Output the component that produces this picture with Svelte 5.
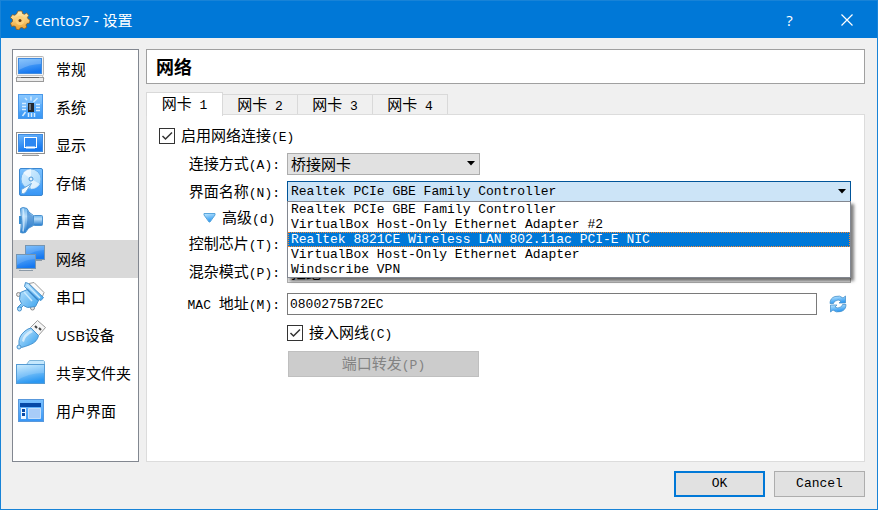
<script lang="ts">
	/**
	 * VM settings dialog, network page
	 *
	 * Category list on the left, adapter tabs and form on the right.
	 */

	const categories = [
		{ id: 'general', label: '常规' },
		{ id: 'system', label: '系统' },
		{ id: 'display', label: '显示' },
		{ id: 'storage', label: '存储' },
		{ id: 'audio', label: '声音' },
		{ id: 'network', label: '网络' },
		{ id: 'serial', label: '串口' },
		{ id: 'usb', label: 'USB设备' },
		{ id: 'folders', label: '共享文件夹' },
		{ id: 'interface', label: '用户界面' }
	];

	const adapters = [1, 2, 3, 4];

	const interfaces = [
		'Realtek PCIe GBE Family Controller',
		'VirtualBox Host-Only Ethernet Adapter #2',
		'Realtek 8821CE Wireless LAN 802.11ac PCI-E NIC',
		'VirtualBox Host-Only Ethernet Adapter',
		'Windscribe VPN'
	];

	let category = $state('network');
	let adapter = $state(1);
	let enabled = $state(true);
	let connected = $state(true);
	let mac = $state('0800275B72EC');
	let current = $state(interfaces[0]);
	let hovered = $state(2);
	let listOpen = $state(true);

	const choose = (name: string) => {
		current = name;
		listOpen = false;
	};
</script>

{#snippet icon(id: string)}
	<svg class="icon" viewBox="0 0 32 32" aria-hidden="true">
		{#if id === 'general'}
			<rect x="1.5" y="3.5" width="27" height="19" rx="1" fill="#f2f2f2" stroke="#b4b4b4" />
			<rect x="3.5" y="5.5" width="23" height="15" fill="url(#screen)" stroke="#3f8be0" />
			<path d="M4 6h22v5Q14 11 4 17z" fill="#fff" opacity=".2" />
			<path d="M3 22.5h24l2 3H1z" fill="#f8f8f8" stroke="#c4c4c4" />
			<rect x="1.5" y="24.5" width="27" height="4" fill="#ececec" stroke="#999" />
			<path d="M6 24.500h18" stroke="#666" />
		{:else if id === 'system'}
			<rect x="3.5" y="3.5" width="24" height="24" fill="url(#tile)" stroke="#4a98e8" />
			<path d="M4 4h23v9Q13 13 4 21z" fill="#fff" opacity=".1" />
			<rect x="13" y="12" width="6" height="9" fill="#23282e" />
			<path d="M14 13h2v6h-2z" fill="#6a737d" />
			<path
				d="M16 5.500v4M22.500 7l-4 4M10 7l2 2M7 12.500h4M7 15.500h4M7 18.500h4M21 13.500h4M21 16.500h4M21 19.500h4M13.500 22v4M16.500 22v4M19.500 22v4M10.500 21l-3 4"
				stroke="#d4ecff"
				stroke-width="1.500"
			/>
		{:else if id === 'display'}
			<rect x="1.5" y="3.5" width="28" height="21" fill="#fff" stroke="#8f8f8f" />
			<rect x="3.5" y="5.5" width="24" height="17" fill="url(#screen)" stroke="#3f8be0" />
			<rect x="9.5" y="8.5" width="12" height="10" fill="#2d87f2" stroke="#fff" />
			<path d="M11 18.500h9" stroke="#fff" stroke-width="2" />
			<path d="M10 24.500h11M7 26.500h17" stroke="#9a9a9a" />
			<path d="M8 25.500h15" stroke="#e5e5e5" />
		{:else if id === 'storage'}
			<rect x="4.5" y="1.5" width="23" height="27" rx="1.5" fill="url(#tile)" stroke="#3b87d0" />
			<circle cx="16" cy="12" r="10" fill="url(#disc)" stroke="#6db2ee" />
			<path d="M16 12L8 6q3-4 8-4zM16 12l9 5q-3 5-9 5z" fill="#fff" opacity=".6" />
			<circle cx="16" cy="12" r="2" fill="#e5f3ff" stroke="#4795d8" />
			<path d="M16.500 16.500l-6 9q-2 2-4 1v-4z" fill="#f4faff" stroke="#67a8de" />
		{:else if id === 'audio'}
			<path d="M4 11h3v8H4z" fill="#3a8ed2" />
			<rect x="18.5" y="10.5" width="9" height="10" rx="1" fill="url(#pipe)" stroke="#4b92d0" />
			<path
				d="M5.500 3.500q2-2 6.500 0 1 4 6.500 7v10q-6 2-8 7-3 1-5 0 2-12 0-24z"
				fill="url(#pipe)"
				stroke="#4b92d0"
			/>
			<path d="M12 4q1 11-1 22 3-4 7-6v-9q-5-3-6-7z" fill="#2272c4" opacity=".55" />
			<path d="M8 3.500q2 12 0 23" fill="none" stroke="#e0f2ff" stroke-width="1.500" opacity=".7" />
		{:else if id === 'network'}
			<rect x="10.5" y="2.500" width="19" height="14" fill="url(#screen)" stroke="#7595b2" />
			<path d="M11 3h18v4q-9 0-18 6z" fill="#fff" opacity=".12" />
			<path d="M21 17.500h6" stroke="#8b99a6" />
			<rect x="1.5" y="11.5" width="19" height="14" fill="url(#screen)" stroke="#7595b2" />
			<path d="M2 12h18v4q-9 0-18 6z" fill="#fff" opacity=".12" />
			<path d="M4 27.500h14" stroke="#8b99a6" />
			<path d="M6 26.500h10" stroke="#e2e9ef" />
		{:else if id === 'serial'}
			<path d="M14 2.500l5-1 10 10-2 5z" fill="#fafafa" stroke="#9c9c9c" />
			<circle cx="3.5" cy="13.5" r="2" fill="#e6e6e6" stroke="#8a8a8a" />
			<circle cx="17.500" cy="27" r="2" fill="#e6e6e6" stroke="#8a8a8a" />
			<path
				d="M10.500 1.500l3 1 15 14-2.500 3-2-1-3.500 7-8 1-4-2-4 4-2-2 4-4-2-4 1-7 7-3-3-3z"
				fill="url(#plug)"
				stroke="#4691cd"
			/>
			<path d="M12 8l11 11" stroke="#3684c8" stroke-width="1.500" />
			<path d="M9 11l8 9M12 4l13 13" stroke="#c9eaff" stroke-width="1.500" />
			<circle cx="4.500" cy="28" r="2" fill="#b5defa" stroke="#4691cd" />
		{:else if id === 'usb'}
			<path d="M15.500 8.500l7-7 8 7-7 8z" fill="#f6f6f6" stroke="#9a9a9a" />
			<path d="M20 7l2 2M24 9l2 2" stroke="#444" stroke-width="2" />
			<path
				d="M4 25.500q-1-8 6-13.500 3-2.500 6-3l7.500 7.500q-1 6-8 9-5 2-9 3z"
				fill="url(#plug)"
				stroke="#4a94cf"
			/>
			<path d="M7 22q1-7 9-11l2 2Q10 17 9 23z" fill="#fff" opacity=".6" />
			<circle cx="4" cy="28" r="2" fill="#bfe3fa" stroke="#4a94cf" />
		{:else if id === 'folders'}
			<path d="M11.500 7.500l3-4h14l1 1v4z" fill="#c5e8fd" stroke="#7fb6da" />
			<rect x="1.5" y="7.5" width="28" height="19" fill="url(#folder)" stroke="#559bd4" />
			<path d="M2 8h27v8Q12 16 2 24z" fill="#fff" opacity=".15" />
		{:else}
			<rect x="3.5" y="4.5" width="25" height="22" fill="url(#tile)" stroke="#5898dc" />
			<path d="M5 8h21v4H5z" fill="#0749a7" />
			<path d="M6 13h5v11H6z" fill="#eaf5ff" />
			<path d="M7 14h3v3H7zM7 18h3v3H7z" fill="#0749a7" />
			<path d="M13.500 13.500h12v10h-12z" fill="#a8ccf8" stroke="#c4defa" />
		{/if}
	</svg>
{/snippet}

{#snippet tick()}
	<svg class="tick" viewBox="0 0 16 16" aria-hidden="true">
		<path d="M3.500 8l3 3L13 4.500" fill="none" stroke="#333" stroke-width="1.500" />
	</svg>
{/snippet}

{#snippet arrow()}
	<svg class="arrow" viewBox="0 0 8 5" aria-hidden="true"><path d="M0 0h8L4 4.500z" fill="#000" /></svg>
{/snippet}

<svg class="defs" aria-hidden="true">
	<defs>
		<linearGradient id="screen" x1="0" y1="0" x2="0.3" y2="1">
			<stop offset="0" stop-color="#6fb8fb" />
			<stop offset="1" stop-color="#1678f0" />
		</linearGradient>
		<linearGradient id="tile" x1="0" y1="0" x2="0" y2="1">
			<stop offset="0" stop-color="#7cc2ff" />
			<stop offset="1" stop-color="#3695f5" />
		</linearGradient>
		<linearGradient id="disc" x1="0" y1="0" x2="1" y2="1">
			<stop offset="0" stop-color="#e2f3ff" />
			<stop offset="1" stop-color="#9ad2fb" />
		</linearGradient>
		<linearGradient id="pipe" x1="0" y1="0" x2="0" y2="1">
			<stop offset="0" stop-color="#6fb5ec" />
			<stop offset="0.35" stop-color="#b9defa" />
			<stop offset="1" stop-color="#2179cc" />
		</linearGradient>
		<linearGradient id="plug" x1="0" y1="0" x2="1" y2="1">
			<stop offset="0" stop-color="#d0edff" />
			<stop offset="1" stop-color="#2b9bec" />
		</linearGradient>
		<linearGradient id="folder" x1="0" y1="0" x2="0.3" y2="1">
			<stop offset="0" stop-color="#c4eaff" />
			<stop offset="1" stop-color="#2c98f2" />
		</linearGradient>
		<linearGradient id="gold" x1="0" y1="0" x2="0" y2="1">
			<stop offset="0" stop-color="#fff0b8" />
			<stop offset="1" stop-color="#eda02c" />
		</linearGradient>
	</defs>
</svg>

<div class="dialog">
	<header class="titlebar">
		<svg class="gear" viewBox="0 0 20 20" aria-hidden="true">
			<path
				d="M8 1h4l.5 2.500 2 .8 2.200-1.400 2 2.600-1.300 2 .8 1.500L20 10l-.5 3-2.500.5-1 1.500.9 2.200-2.800 1.800-2-1.500-1.600.3L9 20l-3-.8-.3-2.400L4 16l-2.400.4L.5 13l2-1.500V9.500l-2-2 1.800-2.800 2.500.5L6.500 4z"
				fill="url(#gold)"
				stroke="#8a5a20"
				stroke-width=".8"
			/>
			<circle cx="10" cy="10.500" r="4.500" fill="#fbd07a" />
			<circle cx="10" cy="10.500" r="1.500" fill="#6c3b10" />
		</svg>
		<h1>centos7 - 设置</h1>
		<button class="window-button" type="button" aria-label="Help">?</button>
		<button class="window-button" type="button" aria-label="Close">
			<svg class="close" viewBox="0 0 12 12" aria-hidden="true">
				<path d="M0.500 0.500l11 11M11.500 0.500l-11 11" stroke="#fff" stroke-width="1.200" />
			</svg>
		</button>
	</header>

	<main class="body">
		<nav class="sidebar">
			{#each categories as item (item.id)}
				<button
					class="category"
					class:selected={category === item.id}
					type="button"
					onclick={() => (category = item.id)}
				>
					{@render icon(item.id)}
					<span>{item.label}</span>
				</button>
			{/each}
		</nav>

		<section class="page">
			<h2 class="heading">网络</h2>

			<div class="tabs" role="tablist">
				{#each adapters as n (n)}
					<button
						class="tab"
						class:active={adapter === n}
						type="button"
						role="tab"
						aria-selected={adapter === n}
						onclick={() => (adapter = n)}
					>
						<span class="han">网卡</span> {n}
					</button>
				{/each}
			</div>

			<div class="panel" role="tabpanel">
				<label class="check">
					<span class="box"><input type="checkbox" bind:checked={enabled} />{#if enabled}{@render tick()}{/if}</span>
					<span><span class="han">启用网络连接</span>(E)</span>
				</label>

				<div class="row">
					<label class="name" for="attached"><span class="han">连接方式</span>(A):</label>
					<div class="combo short">
						<select id="attached" class="han">
							<option>桥接网卡</option>
						</select>
						{@render arrow()}
					</div>
				</div>

				<div class="row">
					<label class="name" for="interface"><span class="han">界面名称</span>(N):</label>
					<div class="combo" class:open={listOpen}>
						<select id="interface" bind:value={current}>
							{#each interfaces as name (name)}
								<option>{name}</option>
							{/each}
						</select>
						{@render arrow()}
						{#if listOpen}
							<div class="popup" role="listbox" aria-label="界面名称">
								{#each interfaces as name, i (name)}
									<button
										class="option"
										class:hovered={hovered === i}
										type="button"
										role="option"
										aria-selected={hovered === i}
										onmouseenter={() => (hovered = i)}
										onclick={() => choose(name)}
									>
										{name}
									</button>
								{/each}
							</div>
						{/if}
					</div>
				</div>

				<div class="row advanced-row">
					<button class="advanced" type="button" aria-expanded="true">
						<svg class="triangle" viewBox="0 0 13 10" aria-hidden="true">
							<path d="M1 .5h11v1.500L7 9H6L1 2z" fill="url(#folder)" stroke="#5aa6dc" />
						</svg>
						<span><span class="han">高级</span>(d)</span>
					</button>
				</div>

				<div class="row">
					<label class="name" for="chip"><span class="han">控制芯片</span>(T):</label>
					<div class="combo">
						<select id="chip"></select>
					</div>
				</div>

				<div class="row">
					<label class="name" for="promiscuous"><span class="han">混杂模式</span>(P):</label>
					<div class="combo">
						<select id="promiscuous" class="han">
							<option>拒绝</option>
						</select>
					</div>
				</div>

				<div class="row mac-row">
					<label class="name" for="mac">MAC <span class="han">地址</span>(M):</label>
					<input id="mac" class="text" type="text" bind:value={mac} />
					<button class="refresh" type="button" aria-label="Refresh">
						<svg viewBox="0 0 18 18" aria-hidden="true">
							<path
								d="M1 8.500Q1 3 6 1.500q5-1.500 8 1.500l2.500-2v7H10L12 6Q9 4 6.500 6 4.500 7 4.500 8.500z"
								fill="url(#folder)"
								stroke="#4a93cc"
								stroke-width=".8"
							/>
							<path
								d="M17 9.500q0 5.500-5 7-5 1.500-8-1.500l-2.500 2v-7H8L6 12q3 2 5.500 0 2-1 2-2.500z"
								fill="url(#folder)"
								stroke="#4a93cc"
								stroke-width=".8"
							/>
						</svg>
					</button>
				</div>

				<label class="check indented">
					<span class="box"><input type="checkbox" bind:checked={connected} />{#if connected}{@render tick()}{/if}</span>
					<span><span class="han">接入网线</span>(C)</span>
				</label>

				<button class="forward" type="button" disabled><span class="han">端口转发</span>(P)</button>
			</div>
		</section>
	</main>

	<footer class="actions">
		<button class="action primary" type="button">OK</button>
		<button class="action" type="button">Cancel</button>
	</footer>
</div>

<style>
	:global(body) {
		margin: 0;
	}

	.dialog,
	.dialog * {
		box-sizing: border-box;
	}

	.dialog {
		--ui: 'Open Sans', 'Noto Sans CJK SC', sans-serif;
		--mono: 'Liberation Mono', 'Noto Sans CJK SC', monospace;
		--label: 121px;
		display: flex;
		flex-direction: column;
		min-height: 100vh;
		border: 1px solid #1883d7;
		background: #f0f0f0;
		color: #000;
		font-family: var(--mono);
		font-size: 13px;
		line-height: 20px;
	}

	.defs {
		position: absolute;
		width: 0;
		height: 0;
	}

	button,
	select,
	input {
		margin: 0;
		padding: 0;
		border: 0;
		border-radius: 0;
		background: none;
		color: inherit;
		font: inherit;
	}

	.han {
		font-family: 'Noto Sans CJK SC', sans-serif;
		font-size: 15px;
	}

	/* Title bar */
	.titlebar {
		display: flex;
		align-items: center;
		height: 37px;
		padding-left: 9px;
		background: #0078d7;
		color: #fff;
		font-family: var(--ui);
	}

	.gear {
		width: 20px;
		height: 20px;
		margin-right: 5px;
	}

	h1 {
		flex: 1;
		margin: 0;
		font-size: 15px;
		font-weight: 400;
	}

	.window-button {
		display: flex;
		align-items: center;
		justify-content: center;
		width: 57px;
		height: 37px;
		font-size: 15px;
	}

	.close {
		width: 12px;
		height: 12px;
	}

	.window-button:last-child {
		margin-right: 2px;
	}

	/* Body */
	.body {
		display: flex;
		flex: 1;
		gap: 7px;
		padding: 11px 12px 0 11px;
	}

	.sidebar {
		display: flex;
		flex-direction: column;
		flex: 0 0 127px;
		border: 1px solid #828790;
		background: #fff;
		font-family: var(--ui);
		font-size: 15px;
	}

	.category {
		display: flex;
		align-items: center;
		gap: 9px;
		height: 38px;
		padding-left: 2px;
		text-align: left;
		white-space: nowrap;
	}

	.category.selected {
		background: #d9d9d9;
	}

	.icon {
		flex: none;
		width: 32px;
		height: 32px;
	}

	.page {
		display: flex;
		flex-direction: column;
		flex: 1;
		min-width: 0;
	}

	.heading {
		margin: 0;
		padding: 6px 9px 7px;
		border: 1px solid #a0a0a0;
		background: #fff;
		font-family: 'Noto Sans CJK SC', sans-serif;
		font-size: 18px;
		font-weight: 700;
		line-height: 20px;
	}

	/* Tabs */
	.tabs {
		display: flex;
		align-items: flex-end;
		height: 23px;
		margin-top: 8px;
	}

	.tab {
		width: 75px;
		height: 21px;
		border: 1px solid #d9d9d9;
		border-left: 0;
		line-height: 18px;
		white-space: nowrap;
	}

	.tab.active {
		position: relative;
		width: 77px;
		height: 24px;
		margin-bottom: -1px;
		border-left: 1px solid #d9d9d9;
		border-bottom: 0;
		background: #fff;
	}

	.panel {
		display: flex;
		flex-direction: column;
		flex: 1;
		gap: 6px;
		margin-top: -1px;
		padding: 10px 13px 0 12px;
		border: 1px solid #dcdcdc;
		background: #fff;
	}

	/* Form */
	.row {
		display: flex;
		align-items: center;
		gap: 7px;
		height: 22px;
	}

	.name {
		flex: 0 0 var(--label);
		text-align: right;
		white-space: nowrap;
	}

	.check {
		display: flex;
		align-items: center;
		align-self: flex-start;
		gap: 6px;
		height: 22px;
	}

	.check.indented {
		height: 24px;
		margin-left: 128px;
	}

	.box {
		position: relative;
		width: 16px;
		height: 16px;
	}

	.box input {
		display: block;
		width: 16px;
		height: 16px;
		border: 1px solid #333;
		background: #fff;
		appearance: none;
	}

	.tick {
		position: absolute;
		inset: 0;
		pointer-events: none;
	}

	.combo {
		position: relative;
		flex: 1;
	}

	.combo.short {
		flex: 0 0 193px;
	}

	.combo select {
		display: block;
		width: 100%;
		height: 22px;
		padding: 0 20px 0 3px;
		border: 1px solid #adadad;
		background: #e1e1e1;
		line-height: 20px;
		appearance: none;
	}

	.combo.open select {
		border-color: #005499;
		background: #cce4f7;
	}

	.arrow {
		position: absolute;
		top: 8px;
		right: 5px;
		width: 8px;
		height: 5px;
		pointer-events: none;
	}

	.popup {
		position: absolute;
		top: 20px;
		left: 0;
		right: 0;
		z-index: 1;
		display: flex;
		flex-direction: column;
		border: 1px solid #828790;
		background: #fff;
		box-shadow: 3px 3px 3px rgba(0, 0, 0, 0.5);
	}

	.option {
		height: 15px;
		padding: 1px 0 0 3px;
		line-height: 14px;
		text-align: left;
		white-space: nowrap;
	}

	.option.hovered {
		background: #0078d7;
		color: #fff;
		outline: 1px dotted #ff8728;
		outline-offset: -1px;
	}

	.advanced-row {
		height: 18px;
		padding-left: 44px;
	}

	.advanced {
		display: flex;
		align-items: center;
		gap: 6px;
	}

	.triangle {
		width: 13px;
		height: 10px;
	}

	.mac-row {
		margin-top: 4px;
	}

	.text {
		flex: 1;
		min-width: 0;
		height: 22px;
		padding: 0 2px;
		border: 1px solid #7a7a7a;
		background: #fff;
	}

	.refresh {
		display: flex;
		justify-content: center;
		width: 27px;
	}

	.refresh svg {
		width: 18px;
		height: 18px;
	}

	.forward {
		width: 191px;
		height: 26px;
		margin-left: 129px;
		border: 1px solid #bfbfbf;
		background: #ccc;
		color: #838383;
	}

	/* Footer */
	.actions {
		display: flex;
		justify-content: flex-end;
		gap: 9px;
		padding: 9px 12px 12px;
	}

	.action {
		width: 91px;
		height: 26px;
		border: 1px solid #adadad;
		background: #e1e1e1;
	}

	.action.primary {
		border: 2px solid #0078d7;
	}
</style>
